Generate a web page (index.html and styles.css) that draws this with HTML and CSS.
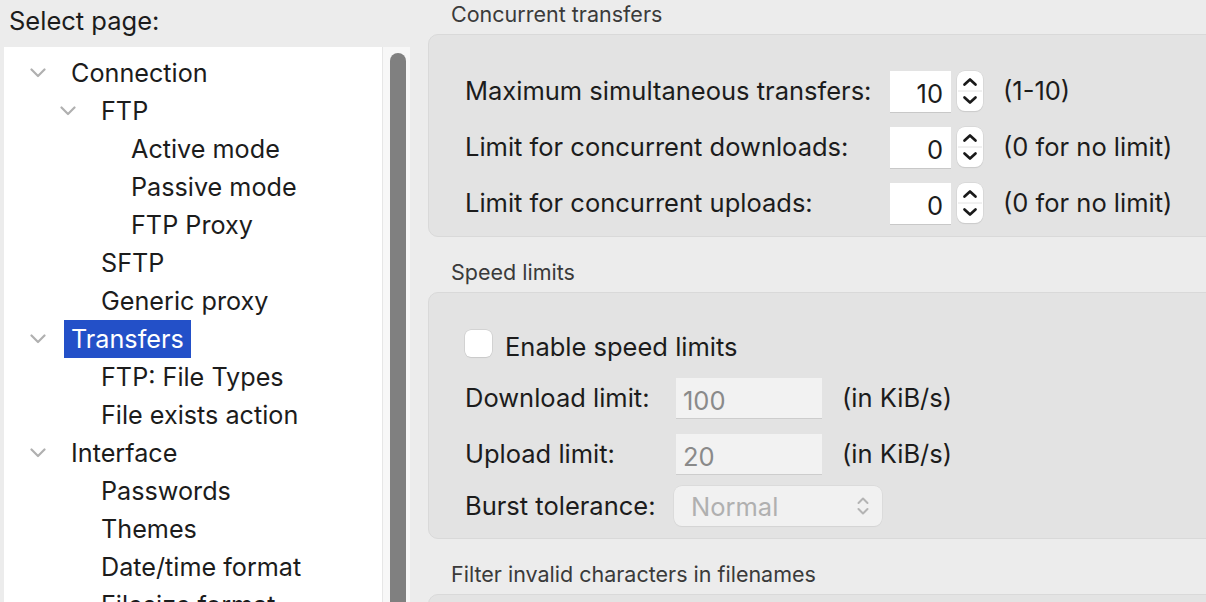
FILE: index.html
```html
<!DOCTYPE html>
<html lang="en">
<head>
<meta charset="utf-8">
<title>Settings</title>
<link rel="stylesheet" href="styles.css">
</head>
<body>
<div class="app">
  <aside class="sidebar">
    <div class="sidebar-title">Select page:</div>
    <div class="tree-wrap">
      <ul class="tree">
        <li class="row lvl0"><span class="toggle"><svg viewBox="0 0 16 10" width="16" height="10"><path d="M1.5 1.5 L8 8 L14.5 1.5" /></svg></span><span class="label">Connection</span></li>
        <li class="row lvl1"><span class="toggle"><svg viewBox="0 0 16 10" width="16" height="10"><path d="M1.5 1.5 L8 8 L14.5 1.5" /></svg></span><span class="label">FTP</span></li>
        <li class="row lvl2"><span class="toggle"></span><span class="label">Active mode</span></li>
        <li class="row lvl2"><span class="toggle"></span><span class="label">Passive mode</span></li>
        <li class="row lvl2"><span class="toggle"></span><span class="label">FTP Proxy</span></li>
        <li class="row lvl1"><span class="toggle"></span><span class="label">SFTP</span></li>
        <li class="row lvl1"><span class="toggle"></span><span class="label">Generic proxy</span></li>
        <li class="row lvl0"><span class="toggle"><svg viewBox="0 0 16 10" width="16" height="10"><path d="M1.5 1.5 L8 8 L14.5 1.5" /></svg></span><span class="label selected">Transfers</span></li>
        <li class="row lvl1"><span class="toggle"></span><span class="label">FTP: File Types</span></li>
        <li class="row lvl1"><span class="toggle"></span><span class="label">File exists action</span></li>
        <li class="row lvl0"><span class="toggle"><svg viewBox="0 0 16 10" width="16" height="10"><path d="M1.5 1.5 L8 8 L14.5 1.5" /></svg></span><span class="label">Interface</span></li>
        <li class="row lvl1"><span class="toggle"></span><span class="label">Passwords</span></li>
        <li class="row lvl1"><span class="toggle"></span><span class="label">Themes</span></li>
        <li class="row lvl1"><span class="toggle"></span><span class="label">Date/time format</span></li>
        <li class="row lvl1"><span class="toggle"></span><span class="label">Filesize format</span></li>
      </ul>
      <div class="scrollbar"><div class="thumb"></div></div>
    </div>
  </aside>

  <main class="settings">
    <section class="group">
      <h2 class="group-title">Concurrent transfers</h2>
      <div class="group-box box-concurrent">
        <div class="num-row">
          <span class="text">Maximum simultaneous transfers:</span>
          <span class="num-input">10</span>
          <span class="stepper"><svg viewBox="0 0 26 40" width="26" height="40"><path class="up" d="M7.5 13.5 L13 8.5 L18.5 13.5"/><line class="div" x1="1" y1="20" x2="25" y2="20"/><path class="dn" d="M7.5 26.5 L13 31.5 L18.5 26.5"/></svg></span>
          <span class="text">(1-10)</span>
        </div>
        <div class="num-row">
          <span class="text">Limit for concurrent downloads:</span>
          <span class="num-input">0</span>
          <span class="stepper"><svg viewBox="0 0 26 40" width="26" height="40"><path class="up" d="M7.5 13.5 L13 8.5 L18.5 13.5"/><line class="div" x1="1" y1="20" x2="25" y2="20"/><path class="dn" d="M7.5 26.5 L13 31.5 L18.5 26.5"/></svg></span>
          <span class="text">(0 for no limit)</span>
        </div>
        <div class="num-row">
          <span class="text">Limit for concurrent uploads:</span>
          <span class="num-input">0</span>
          <span class="stepper"><svg viewBox="0 0 26 40" width="26" height="40"><path class="up" d="M7.5 13.5 L13 8.5 L18.5 13.5"/><line class="div" x1="1" y1="20" x2="25" y2="20"/><path class="dn" d="M7.5 26.5 L13 31.5 L18.5 26.5"/></svg></span>
          <span class="text">(0 for no limit)</span>
        </div>
      </div>
    </section>

    <section class="group">
      <h2 class="group-title">Speed limits</h2>
      <div class="group-box box-speed">
        <label class="check-row"><span class="checkbox"></span><span class="text">Enable speed limits</span></label>
        <div class="limit-row row-download">
          <span class="text">Download limit:</span>
          <span class="dis-input">100</span>
          <span class="text">(in KiB/s)</span>
        </div>
        <div class="limit-row row-upload">
          <span class="text">Upload limit:</span>
          <span class="dis-input">20</span>
          <span class="text">(in KiB/s)</span>
        </div>
        <div class="limit-row row-burst">
          <span class="text">Burst tolerance:</span>
          <span class="select"><span class="select-text">Normal</span><svg viewBox="0 0 14 22" width="14" height="22"><path d="M2.5 8 L7 3.5 L11.5 8"/><path d="M2.5 14 L7 18.5 L11.5 14"/></svg></span>
        </div>
      </div>
    </section>

    <section class="group">
      <h2 class="group-title">Filter invalid characters in filenames</h2>
      <div class="group-box box-filter"></div>
    </section>
  </main>
</div>
</body>
</html>
```

FILE: styles.css
```css
* { box-sizing: border-box; }

html, body {
  margin: 0;
  padding: 0;
  width: 1206px;
  height: 602px;
  overflow: hidden;
  background: #ececec;
  font-family: "Inter", "Liberation Sans", sans-serif;
  color: #1c1c1c;
}

.app {
  display: flex;
  height: 602px;
}

/* ---------- sidebar ---------- */
.sidebar {
  width: 410px;
  flex: none;
  display: flex;
  flex-direction: column;
  padding-left: 4px;
}

.sidebar-title {
  height: 47px;
  padding-left: 5px;
  font-size: 25.5px;
  line-height: 42px;
}

.tree-wrap {
  flex: 1;
  display: flex;
  min-height: 0;
}

.tree {
  list-style: none;
  margin: 0;
  padding: 7px 0 0 0;
  width: 378px;
  background: #ffffff;
  overflow: hidden;
}

.row {
  height: 38px;
  display: flex;
  align-items: center;
  font-size: 25.2px;
  white-space: nowrap;
}

.lvl0 { padding-left: 26px; }
.lvl1 { padding-left: 56px; }
.lvl2 { padding-left: 86px; }

.toggle {
  width: 16px;
  height: 10px;
  flex: none;
  display: flex;
  margin-right: 18px;
}

.toggle svg path {
  fill: none;
  stroke: #b0b0b0;
  stroke-width: 2.2;
  stroke-linecap: round;
  stroke-linejoin: round;
}

.label {
  height: 38px;
  line-height: 38px;
  padding: 0 7px;
}

.label.selected {
  background: #2350c8;
  color: #ffffff;
}

.scrollbar {
  width: 28px;
  flex: none;
  background: #f7f7f7;
  border-left: 1px solid #e6e6e6;
  padding: 6px 4px 0 7px;
}

.thumb {
  width: 16px;
  height: 100%;
  border-radius: 8px 8px 0 0;
  background: #808080;
}

/* ---------- settings ---------- */
.settings {
  flex: 1;
  min-width: 0;
  overflow: hidden;
  padding-left: 18px;
  display: flex;
  flex-direction: column;
  gap: 21px;
}

.group-title {
  margin: 0;
  height: 34px;
  padding-left: 23px;
  font-size: 21.5px;
  font-weight: 400;
  line-height: 28px;
  color: #3a3a3a;
}

.group-box {
  width: calc(100% + 30px);
  background: #e3e3e3;
  border: 1px solid #d9d9d9;
  border-radius: 10px;
  padding-left: 36px;
}

.text {
  font-size: 25.5px;
  white-space: nowrap;
}

/* concurrent box */
.box-concurrent {
  padding-top: 34px;
  padding-bottom: 14px;
  display: flex;
  flex-direction: column;
  gap: 15px;
}

.num-row {
  display: grid;
  grid-template-columns: 419px 61px 26px auto;
  column-gap: 6px;
  align-items: center;
  height: 41px;
}

.num-row .text {
  line-height: 44px;
}

.num-row .text:last-child {
  margin-left: 14px;
}

.num-input {
  height: 41px;
  background: #ffffff;
  box-shadow: 0 1px 0 #c8c8c8;
  text-align: right;
  padding-right: 8px;
  font-size: 25.5px;
  line-height: 46px;
}

.stepper {
  width: 26px;
  height: 40px;
  display: flex;
}

.stepper svg {
  background: #ffffff;
  border-radius: 8px;
  box-shadow: 0 0 0 0.5px #cfcfcf, 0 1px 1px rgba(0,0,0,0.12);
}

.stepper path {
  fill: none;
  stroke: #1a1a1a;
  stroke-width: 2.7;
  stroke-linecap: round;
  stroke-linejoin: round;
}

.stepper .div {
  stroke: #e2e2e2;
  stroke-width: 1;
}

/* speed box */
.box-speed {
  padding-top: 37px;
  padding-bottom: 14px;
  display: flex;
  flex-direction: column;
}

.check-row {
  display: flex;
  align-items: center;
  height: 27px;
  gap: 13px;
}

.checkbox {
  width: 27px;
  height: 27px;
  background: #ffffff;
  border-radius: 6px;
  box-shadow: 0 0 0 0.5px #c4c4c4, 0 1px 1px rgba(0,0,0,0.08);
}

.check-row .text {
  padding-top: 5px;
}

.limit-row {
  display: grid;
  grid-template-columns: 191px 146px auto;
  column-gap: 20px;
  align-items: center;
  height: 40px;
}

.row-download { margin-top: 19px; }
.row-upload { margin-top: 16px; }
.row-burst { margin-top: 12px; }

.limit-row .text {
  line-height: 44px;
}

.dis-input {
  height: 40px;
  background: #f2f2f2;
  box-shadow: 0 1px 0 #cdcdcd;
  padding-left: 7px;
  font-size: 25.5px;
  line-height: 46px;
  color: #8a8a8a;
}

.select {
  width: 208px;
  height: 40px;
  margin-left: -2px;
  background: #f1f1f1;
  border-radius: 8px;
  box-shadow: 0 0 0 0.5px #d4d4d4, 0 1px 1px rgba(0,0,0,0.06);
  display: flex;
  align-items: center;
  justify-content: space-between;
  padding: 0 12px 0 17px;
}

.select-text {
  font-size: 25.5px;
  color: #b0b0b0;
}

.select svg path {
  fill: none;
  stroke: #b4b4b4;
  stroke-width: 2;
  stroke-linecap: round;
  stroke-linejoin: round;
}

.box-filter {
  height: 40px;
}
```
